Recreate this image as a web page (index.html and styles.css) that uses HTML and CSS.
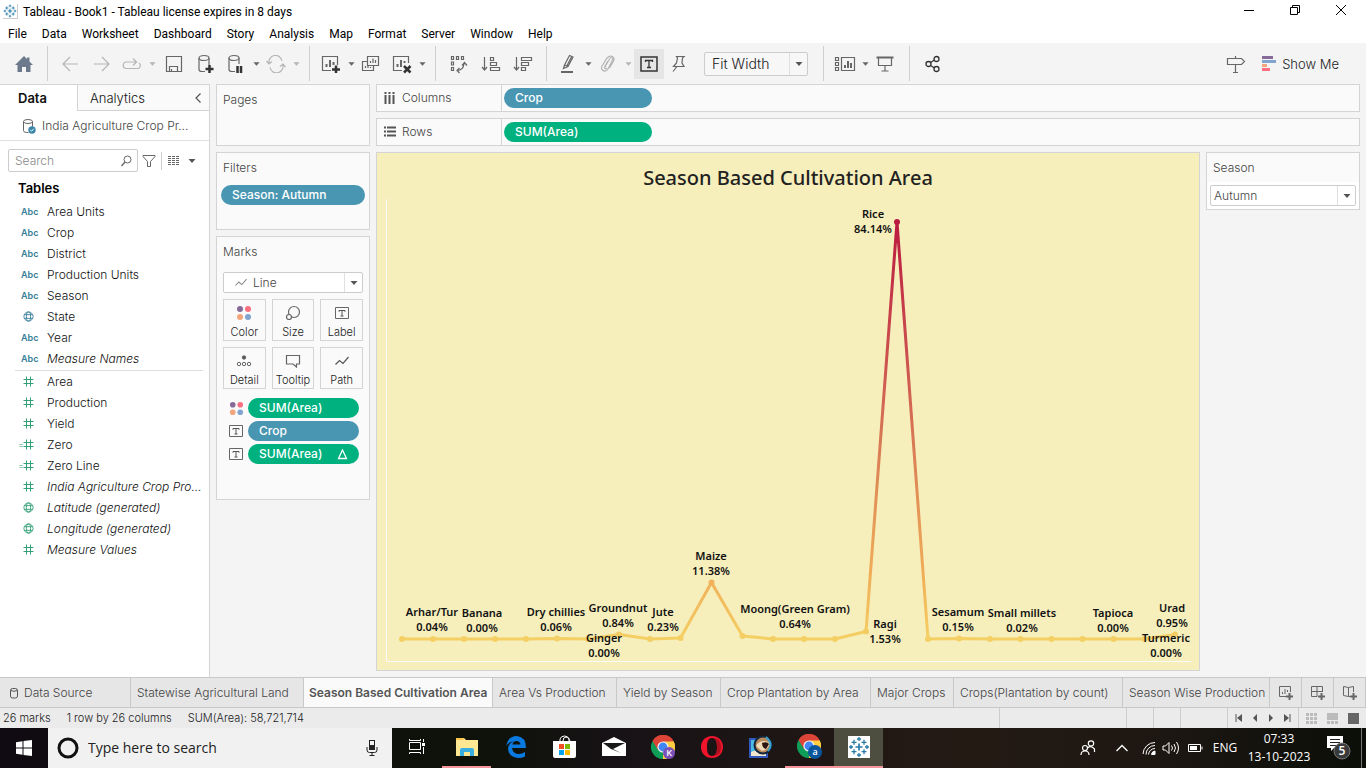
FILE: index.html
```html
<!DOCTYPE html>
<html lang="en">
<head>
<meta charset="utf-8">
<title>Tableau - Book1</title>
<link rel="stylesheet" href="styles.css">
</head>
<body>
<svg class="sprite" aria-hidden="true">
  <symbol id="caret" viewBox="0 0 8 8"><path d="M.5 2h7L4 6z" fill="currentColor"/></symbol>
  <symbol id="logo" viewBox="0 0 22 22"><g fill="none" stroke="currentColor" stroke-width="1.3"><path d="M11 7.5v7M7.5 11h7" stroke-width="1.7"/><path d="M11 1v4M9 3h4M11 17v4M9 19h4M3 9v4M1 11h4M19 9v4M17 11h4M6 3.8v5M3.5 6.3h5M16 3.8v5M13.5 6.3h5M6 13.2v5M3.5 15.7h5M16 13.2v5M13.5 15.7h5"/></g></symbol>
  <symbol id="hash" viewBox="0 0 11 11"><path d="M3.5.5v10M7.5.5v10M.5 3.5h10M.5 7.5h10" stroke="currentColor" fill="none"/></symbol>
  <symbol id="globe" viewBox="0 0 12 12"><g fill="none" stroke="currentColor"><circle cx="6" cy="6" r="5"/><ellipse cx="6" cy="6" rx="2.3" ry="5"/><path d="M1.5 4h9M1.5 8h9"/></g></symbol>
  <symbol id="dots" viewBox="0 0 16 16"><circle cx="4" cy="4" r="3" fill="#866b98"/><circle cx="12" cy="4" r="3" fill="#fb6f80"/><circle cx="4" cy="12" r="3" fill="#f2a57c"/><circle cx="12" cy="12" r="3" fill="#80a4cf"/></symbol>
  <symbol id="tbox" viewBox="0 0 14 12"><path d="M.5.5h13v11H.5z" fill="none" stroke="#666"/><path d="M4 4.8V3.5h6v1.3M7 3.5v5.6M5.5 9h3" fill="none" stroke="#555"/></symbol>
  <symbol id="zig" viewBox="0 0 14 10"><path d="M.5 8.5L4.5 4.500 8 7.500 13.500 1" fill="none" stroke="currentColor" stroke-width="1.2"/></symbol>
  <symbol id="chrome" viewBox="0 0 24 24"><path d="M12 12L1.6 6A12 12 0 0 1 22.4 6z" fill="#db4437"/><path d="M12 12L22.4 6A12 12 0 0 1 12 24z" fill="#ffcd40"/><path d="M12 12L12 24A12 12 0 0 1 1.6 6z" fill="#0f9d58"/><path d="M12 6.5h10.7A12 12 0 0 0 1.6 6L7 15z" fill="#db4437"/><path d="M17 15L12 24A12 12 0 0 0 22.6 6.5H12z" fill="#ffcd40"/><circle cx="12" cy="12" r="5.6" fill="#f1f1f1"/><circle cx="12" cy="12" r="4.4" fill="#4285f4"/></symbol>
</svg>

<header class="titlebar">
  <svg class="app-icon" viewBox="0 0 22 22"><use href="#logo"/></svg>
  <h1 class="window-title">Tableau - Book1 - Tableau license expires in 8 days</h1>
  <div class="window-controls">
    <button aria-label="Minimize"><svg width="12" height="12"><path d="M1 6.5h10" stroke="#000"/></svg></button>
    <button aria-label="Restore"><svg width="12" height="12" fill="none" stroke="#000"><path d="M1.5 3.5h7v7h-7zM3.5 3.5v-2h7v7h-2"/></svg></button>
    <button aria-label="Close"><svg width="12" height="12" fill="none" stroke="#000"><path d="M1 1l10 10M11 1L1 11"/></svg></button>
  </div>
</header>

<nav class="menubar" aria-label="Menu">
  <button>File</button><button>Data</button><button>Worksheet</button><button>Dashboard</button><button>Story</button><button>Analysis</button><button>Map</button><button>Format</button><button>Server</button><button>Window</button><button>Help</button>
</nav>

<div class="toolbar" role="toolbar" aria-label="Toolbar">
  <button class="tool home" aria-label="Start page"><svg width="18" height="18"><path d="M9 1L0 10h2.5v7h4.500v-5h4v5h4.500v-7H18L14.500 6.500V2.500h-2.500v1.500z" fill="#6d7a8b"/></svg></button>
  <span class="sep"></span>
  <button class="tool wide off" aria-label="Undo"><svg width="18" height="16"><path d="M17 8H2M9 1L2 8l7 7"/></svg></button>
  <button class="tool wide off" aria-label="Redo"><svg width="18" height="16"><path d="M1 8h15M9 1l7 7-7 7"/></svg></button>
  <button class="tool off" aria-label="Replay"><svg width="20" height="14"><path d="M14 5H4.500a3 3 0 0 0 0 6.500h11a3 3 0 0 0 1.500-5.500M11 1.500L14.500 5 11 8.500"/></svg></button>
  <button class="drop off" aria-label="Replay options"><svg><use href="#caret"/></svg></button>
  <button class="tool wide" aria-label="Save"><svg width="18" height="18"><path d="M1.500 1.500h15v15h-15zM4.500 16.500v-5h8v5M6.500 16.500v-2.500"/></svg></button>
  <button class="tool wide" aria-label="New data source"><svg width="18" height="20"><path d="M8 17.500H5q-3 0-3-2V4M12 4v7"/><ellipse cx="7" cy="4" rx="5" ry="2.500"/><path class="bold" d="M12.500 11v8M8.500 15h8"/></svg></button>
  <button class="tool" aria-label="Pause updates"><svg width="18" height="20"><path d="M8 17.500H5q-3 0-3-2V4M12 4v6"/><ellipse cx="7" cy="4" rx="5" ry="2.500"/><path class="bold" d="M10.500 12v7M14 12v7"/></svg></button>
  <button class="drop" aria-label="Pause options"><svg><use href="#caret"/></svg></button>
  <button class="tool off" aria-label="Refresh"><svg width="20" height="18"><path d="M3 8A6.500 6.500 0 0 1 16 6M17 10A6.500 6.500 0 0 1 4 12.500M.5 6l2.500 3 3-2.500M14 11.500l3-2.500 2.500 3"/></svg></button>
  <button class="drop off" aria-label="Refresh options"><svg><use href="#caret"/></svg></button>
  <span class="sep"></span>
  <button class="tool" aria-label="New worksheet"><svg width="20" height="20"><path d="M10 16.500H1.500v-14h15V11"/><path class="mid" d="M5.500 13v-3M9 13V6M12.500 11V8"/><path class="bold" d="M15 11.500v7.500M11 15.500h8"/></svg></button>
  <button class="drop" aria-label="New worksheet options"><svg><use href="#caret"/></svg></button>
  <button class="tool" aria-label="Duplicate"><svg width="20" height="20"><path d="M6.500 2.500h11v9h-11zM6 7.500H1.500v9h11V12M9.500 9V7M12 9V4.500M14.500 9V6M4.500 14v-2M7 14v-3M9.500 14v-1"/></svg></button>
  <button class="tool clear" aria-label="Clear sheet"><svg width="20" height="20"><path d="M10 16.500H1.500v-14h15V9"/><path class="mid" d="M5.500 13v-3M9 13V6M12.500 9V7"/><path class="bold" d="M12 12l6.500 6.500M18.500 12L12 18.500"/></svg></button>
  <button class="drop" aria-label="Clear options"><svg><use href="#caret"/></svg></button>
  <span class="sep"></span>
  <button class="tool wide" aria-label="Swap rows and columns"><svg width="20" height="20"><path d="M2.500 2.500h2v3h-2zM7.500 2.500h2v3h-2zM12.500 2.500h2v3h-2zM2.500 8h2v3h-2zM2.500 13.500h2v3h-2zM8 16.500q6.500 0 7-7M10.500 14L8 16.500l2.500 2.500M13 11.500l2.500-3 2.500 3"/></svg></button>
  <button class="tool wide" aria-label="Sort ascending"><svg width="20" height="18"><path d="M3.500 2v13M1 12l2.500 3L6 12M9.500 2.500h3v3h-3zM9.500 7.500h6v3h-6zM9.500 12.500h9v3h-9z"/></svg></button>
  <button class="tool wide" aria-label="Sort descending"><svg width="20" height="18"><path d="M3.500 2v13M1 12l2.500 3L6 12M8.500 2.500h10v3h-10zM8.500 7.500h7v3h-7zM8.500 12.500h4v3h-4z"/></svg></button>
  <span class="sep"></span>
  <button class="tool" aria-label="Highlight"><svg width="18" height="20"><path d="M5.500 11l5-9.500 3.500 1.500-5 9.500-4.500 2zM5.500 11L9 12.500M8 11.500L12.500 3"/><path class="mid" d="M2 18h12"/></svg></button>
  <button class="drop" aria-label="Highlight options"><svg><use href="#caret"/></svg></button>
  <button class="tool off" aria-label="Group members"><svg width="16" height="18"><path d="M5 12l4.500-8q2-2.500 3.500 0L8 14q-3 4-6 .5Q1 13 2 11l5-8q3-3 6-1 2 2 0 5l-3.500 6M8 6l-3.500 6q0 3 2.500 1"/></svg></button>
  <button class="drop off" aria-label="Group options"><svg><use href="#caret"/></svg></button>
  <button class="tool pressed" aria-label="Show mark labels"><svg width="18" height="16"><path d="M1 1h16v14H1z" stroke="#333" stroke-width="1.500"/><path d="M5.500 6V4.500h7V6M9 4.500v7M7 11.500h4" stroke="#333" stroke-width="1.300"/></svg></button>
  <button class="tool" aria-label="Fix axes"><svg width="16" height="18"><path d="M6.500 1.500h7.500l-1.500 1.500-.5 5 2 3.500H3.500L6.500 8l1-5zM7 11.500L3 16.500"/></svg></button>
  <div class="select-box fit">
    <select aria-label="Fit"><option>Fit Width</option></select>
    <svg class="caret"><use href="#caret"/></svg>
  </div>
  <span class="sep"></span>
  <button class="tool" aria-label="Show or hide cards"><svg width="22" height="18"><path d="M1.500 2.500h3v3h-3zM1.500 7.500h3v3h-3zM1.500 12.500h3v3h-3zM7.500 2.500h13v13h-13z"/><path class="mid" d="M11 13v-3M14 13V6M17 13V8"/></svg></button>
  <button class="drop" aria-label="Card options"><svg><use href="#caret"/></svg></button>
  <button class="tool present" aria-label="Presentation mode"><svg width="18" height="18"><path d="M2.500 2v8.500h13V2M9 10.500v5M5.500 16h7"/><path class="mid" d="M.5 2.500h17"/></svg></button>
  <span class="sep"></span>
  <button class="tool wide" aria-label="Share"><svg width="18" height="18"><g stroke="#333" stroke-width="1.300"><circle cx="4.500" cy="9" r="2.500"/><circle cx="12.500" cy="4" r="2.500"/><circle cx="12.500" cy="14" r="2.500"/><path d="M6.500 7.500l4-2.500M6.500 10.500l4 2.500"/></g></svg></button>
  <button class="tool guide" aria-label="Guide"><svg width="20" height="20"><path d="M1.500 4.500h14l3 3-3 3h-14zM9.500 2v2.500M9.500 10.500v8M7 18.500h5"/></svg></button>
  <button class="show-me"><svg width="15" height="16"><path fill="#866b98" d="M0 0h11v3H0z"/><path fill="#80a4cf" d="M0 4h14v3H0z"/><path fill="#f2a57c" d="M0 8h5v3H0z"/><path fill="#fb6f80" d="M0 12h8v3H0z"/></svg>Show Me</button>
</div>

<main class="workspace">
  <aside class="data-pane">
    <div class="pane-tabs">
      <button class="pane-tab active">Data</button>
      <button class="pane-tab">Analytics</button>
      <button class="collapse" aria-label="Collapse pane"><svg width="8" height="12"><path d="M6.500 1.500L2 6l4.500 4.500" fill="none" stroke="#555" stroke-width="1.200"/></svg></button>
    </div>
    <div class="source"><svg width="14" height="16"><path d="M1.500 3.500v9q0 2 3 2h2M10.500 3.500v5" fill="none" stroke="#666"/><ellipse cx="6" cy="3.500" rx="4.500" ry="2" fill="none" stroke="#666"/><circle cx="10" cy="12" r="3.700" fill="#3b86a8"/><path d="M8.300 12l1.200 1.200 2.200-2.400" fill="none" stroke="#fff"/></svg><span>India Agriculture Crop Pr...</span></div>
    <div class="search-row">
      <label class="search"><input type="text" placeholder="Search" aria-label="Search fields"><svg width="11" height="12"><circle cx="6.500" cy="4.500" r="3.500" fill="none" stroke="#666"/><path d="M4 7L.5 11" stroke="#666" stroke-width="1.300"/></svg></label>
      <button aria-label="Filter"><svg width="14" height="14"><path d="M1 1.500h12v1L8.500 7.500v5h-3v-5L1 2.500z" fill="none" stroke="#666"/></svg></button>
      <button class="view-as" aria-label="View as"><svg width="12" height="11"><path d="M0 1.500h12M0 3.500h12M0 5.500h12M0 7.500h12M0 9.500h12" stroke="#666" stroke-dasharray="3 1"/></svg><svg class="caret"><use href="#caret"/></svg></button>
    </div>
    <h2 class="tables-title">Tables</h2>
    <ul class="fields">
      <li><b class="abc">Abc</b>Area Units</li>
      <li><b class="abc">Abc</b>Crop</li>
      <li><b class="abc">Abc</b>District</li>
      <li><b class="abc">Abc</b>Production Units</li>
      <li><b class="abc">Abc</b>Season</li>
      <li><svg class="type dim"><use href="#globe"/></svg>State</li>
      <li><b class="abc">Abc</b>Year</li>
      <li class="gen"><b class="abc">Abc</b>Measure Names</li>
    </ul>
    <ul class="fields measures">
      <li><svg class="type"><use href="#hash"/></svg>Area</li>
      <li><svg class="type"><use href="#hash"/></svg>Production</li>
      <li><svg class="type"><use href="#hash"/></svg>Yield</li>
      <li class="calc"><svg class="type"><use href="#hash"/></svg>Zero</li>
      <li class="calc"><svg class="type"><use href="#hash"/></svg>Zero Line</li>
      <li class="gen"><svg class="type"><use href="#hash"/></svg>India Agriculture Crop Pro...</li>
      <li class="gen"><svg class="type"><use href="#globe"/></svg>Latitude (generated)</li>
      <li class="gen"><svg class="type"><use href="#globe"/></svg>Longitude (generated)</li>
      <li class="gen"><svg class="type"><use href="#hash"/></svg>Measure Values</li>
    </ul>
  </aside>

  <div class="cards">
    <section class="card pages"><h2>Pages</h2></section>
    <section class="card filters"><h2>Filters</h2><button class="pill dimension">Season: Autumn</button></section>
    <section class="card marks">
      <h2>Marks</h2>
      <div class="select-box mark-type">
        <svg class="mark-icon"><use href="#zig"/></svg>
        <select aria-label="Mark type"><option>Line</option></select>
        <svg class="caret"><use href="#caret"/></svg>
      </div>
      <div class="mark-buttons">
        <button><svg width="16" height="16"><use href="#dots"/></svg>Color</button>
        <button><svg width="16" height="16" fill="none" stroke="#666" stroke-width="1.200"><circle cx="9" cy="7" r="5.500"/><circle cx="4" cy="12" r="2.500" fill="#fafafa"/></svg>Size</button>
        <button><svg width="14" height="12"><use href="#tbox"/></svg>Label</button>
        <button><svg width="16" height="12" fill="none" stroke="#666"><circle cx="8" cy="2.500" r="1.700" fill="#555"/><circle cx="3" cy="9" r="1.700"/><circle cx="8" cy="9" r="1.700"/><circle cx="13" cy="9" r="1.700"/></svg>Detail</button>
        <button><svg width="16" height="14" fill="none" stroke="#666" stroke-width="1.200"><path d="M1.500 1.500h13v8.500h-3v3L8 10H1.500z"/></svg>Tooltip</button>
        <button><svg width="16" height="10" color="#555"><use href="#zig"/></svg>Path</button>
      </div>
      <ul class="encodings">
        <li><svg width="15" height="15"><use href="#dots"/></svg><button class="pill measure">SUM(Area)</button></li>
        <li><svg width="14" height="12"><use href="#tbox"/></svg><button class="pill dimension">Crop</button></li>
        <li><svg width="14" height="12"><use href="#tbox"/></svg><button class="pill measure">SUM(Area)<svg width="11" height="11"><path d="M5.500 1L1.500 9.500h8z" fill="none" stroke="#fff" stroke-width="1.300"/></svg></button></li>
      </ul>
    </section>
  </div>

  <div class="sheet">
    <section class="shelf"><h2><svg width="12" height="12"><path d="M1.500 0v2M1.500 3v9M5.500 0v2M5.500 3v9M9.500 0v2M9.500 3v9" stroke="#555" stroke-width="2"/></svg>Columns</h2><button class="pill dimension">Crop</button></section>
    <section class="shelf"><h2><svg width="12" height="12"><path d="M0 1.500h2M3 1.500h9M0 5.500h2M3 5.500h9M0 9.500h2M3 9.500h9" stroke="#555" stroke-width="2"/></svg>Rows</h2><button class="pill measure">SUM(Area)</button></section>
    <div class="view-row">
      <section class="view">
        <h2>Season Based Cultivation Area</h2>
        <svg class="chart" viewBox="377 199 822 471" role="img" aria-label="Cultivation area by crop">
          <defs><linearGradient id="heat" gradientUnits="userSpaceOnUse" x1="0" y1="222" x2="0" y2="640"><stop offset="0" stop-color="#bb1a40"/><stop offset=".35" stop-color="#cd5550"/><stop offset=".6" stop-color="#dd8856"/><stop offset=".84" stop-color="#f0ad58"/><stop offset="1" stop-color="#f4d064"/></linearGradient></defs>
          <path class="axis" d="M386.500 199v462.500H1191"/>
          <path class="series" d="M402 639L433 639L464 639L495 639L526 639L557 638.500L588 639L619 634.500L650 639L680.500 638L711.500 582.500L742.500 636L773 639L804 639L835 639L866 631.500L897 222L928 639L959 638.500L990 639L1020.500 639L1051.500 639L1082.500 639L1113.500 639L1144.500 639L1175 634.500"/>
          <g class="points">
            <circle cx="402" cy="639" r="3"/><circle cx="433" cy="639" r="3"/><circle cx="464" cy="639" r="3"/><circle cx="495" cy="639" r="3"/><circle cx="526" cy="639" r="3"/><circle cx="557" cy="638.500" r="3"/><circle cx="588" cy="639" r="3"/><circle cx="619" cy="634.500" r="3"/><circle cx="650" cy="639" r="3"/><circle cx="680.500" cy="638" r="3"/><circle cx="711.500" cy="582.500" r="3"/><circle cx="742.500" cy="636" r="3"/><circle cx="773" cy="639" r="3"/><circle cx="804" cy="639" r="3"/><circle cx="835" cy="639" r="3"/><circle cx="866" cy="631.500" r="3"/><circle cx="897" cy="222" r="3"/><circle cx="928" cy="639" r="3"/><circle cx="959" cy="638.500" r="3"/><circle cx="990" cy="639" r="3"/><circle cx="1020.500" cy="639" r="3"/><circle cx="1051.500" cy="639" r="3"/><circle cx="1082.500" cy="639" r="3"/><circle cx="1113.500" cy="639" r="3"/><circle cx="1144.500" cy="639" r="3"/><circle cx="1175" cy="634.500" r="3"/>
          </g>
          <g class="labels">
            <text x="432" y="616">Arhar/Tur</text><text x="432" y="631">0.04%</text>
            <text x="482" y="617">Banana</text><text x="482" y="632">0.00%</text>
            <text x="556" y="616">Dry chillies</text><text x="556" y="631">0.06%</text>
            <text x="618" y="612">Groundnut</text><text x="618" y="627">0.84%</text>
            <text x="604" y="642">Ginger</text><text x="604" y="657">0.00%</text>
            <text x="663" y="616">Jute</text><text x="663" y="631">0.23%</text>
            <text x="711" y="560">Maize</text><text x="711" y="575">11.38%</text>
            <text x="795" y="613">Moong(Green Gram)</text><text x="795" y="628">0.64%</text>
            <text x="873" y="218">Rice</text><text x="873" y="233">84.14%</text>
            <text x="885" y="628">Ragi</text><text x="885" y="643">1.53%</text>
            <text x="958" y="616">Sesamum</text><text x="958" y="631">0.15%</text>
            <text x="1022" y="617">Small millets</text><text x="1022" y="632">0.02%</text>
            <text x="1113" y="617">Tapioca</text><text x="1113" y="632">0.00%</text>
            <text x="1172" y="612">Urad</text><text x="1172" y="627">0.95%</text>
            <text x="1166" y="642">Turmeric</text><text x="1166" y="657">0.00%</text>
          </g>
        </svg>
      </section>
      <section class="card season">
        <h2><label for="season">Season</label></h2>
        <div class="select-box"><select id="season"><option>Autumn</option></select><svg class="caret"><use href="#caret"/></svg></div>
      </section>
    </div>
  </div>
</main>

<nav class="sheet-tabs" aria-label="Sheets">
  <button><svg width="10" height="12"><rect x="1.500" y="1.500" width="7" height="9.500" rx="2" fill="none" stroke="#555"/><path d="M1.500 3.500q3.500 1.500 7 0" fill="none" stroke="#555"/></svg>Data Source</button>
  <button>Statewise Agricultural Land</button>
  <button class="active">Season Based Cultivation Area</button>
  <button>Area Vs Production</button>
  <button>Yield by Season</button>
  <button>Crop Plantation by Area</button>
  <button>Major Crops</button>
  <button>Crops(Plantation by count)</button>
  <button>Season Wise Production</button>
  <button class="new" aria-label="New worksheet"><svg width="16" height="16"><path d="M8 11.500H1.500v-10h11V7M4.500 9V7M7 9V4M9.500 7V5"/><path class="plus" d="M11.500 8v7M8 11.500h7"/></svg></button>
  <button class="new" aria-label="New dashboard"><svg width="16" height="16"><path d="M7 11.500H1.500v-10h11V7M7 1.500v10M1.500 6.500h11"/><path class="plus" d="M11.500 8v7M8 11.500h7"/></svg></button>
  <button class="new" aria-label="New story"><svg width="16" height="16"><path d="M6.500 11.500l-5-1v-9l5 1 5-1V7M6.500 2.500v9h2"/><path class="plus" d="M11.500 8v7M8 11.500h7"/></svg></button>
</nav>

<footer class="status">
  <div class="summary"><span>26 marks</span><span>1 row by 26 columns</span><span>SUM(Area): 58,721,714</span></div>
  <div></div><div></div><div></div><div></div>
  <div class="pager">
    <button aria-label="First"><svg width="8" height="8"><path d="M1 0v8" stroke="#555"/><path d="M7 0v8L2 4z" fill="#555"/></svg></button>
    <button aria-label="Previous"><svg width="8" height="8"><path d="M6 0v8L2 4z" fill="#555"/></svg></button>
    <button aria-label="Next"><svg width="8" height="8"><path d="M2 0v8l4-4z" fill="#555"/></svg></button>
    <button aria-label="Last"><svg width="8" height="8"><path d="M7 0v8" stroke="#555"/><path d="M1 0v8l5-4z" fill="#555"/></svg></button>
  </div>
  <div class="modes">
    <button aria-label="Sheet sorter"><svg width="11" height="11"><path d="M0 1.500h11M0 5.500h11M0 9.500h11" stroke="#bbb" stroke-width="3" stroke-dasharray="3 1"/></svg></button>
    <button aria-label="Filmstrip"><svg width="11" height="11"><path d="M0 0h11v7H0z" fill="#bbb"/><path d="M0 9.500h11" stroke="#bbb" stroke-width="3" stroke-dasharray="3 1"/></svg></button>
    <button aria-label="Tabs"><svg width="11" height="11"><path d="M0 0h11v11H0z" fill="#666"/></svg></button>
  </div>
</footer>

<div class="taskbar">
  <button class="start" aria-label="Start"><svg width="16" height="16" fill="#fff"><path d="M0 2.200L6.500 1.300v6.200H0zM7.500 1.100L16 0v7.500H7.500zM0 8.500h6.500v6.200L0 13.800zM7.500 8.500H16V16l-8.500-1.100z"/></svg></button>
  <label class="task-search">
    <svg width="22" height="22"><circle cx="11" cy="11" r="9" fill="none" stroke="#111" stroke-width="3"/></svg>
    <input type="text" placeholder="Type here to search" aria-label="Type here to search">
    <svg width="12" height="18"><rect x="3.500" y="1.500" width="5" height="9" fill="none" stroke="#222"/><path d="M4 6h4v5H4z" fill="#222"/><path d="M1 8v3q0 2.500 2.500 2.500h5Q11 13.500 11 11V8M6 13.500V16M3.500 16.500h5" fill="none" stroke="#222"/></svg>
  </label>
  <div class="apps">
    <button class="task-view" aria-label="Task view"><svg width="18" height="18" fill="none" stroke="#fff"><path d="M1.500 4.500h11v7h-11zM1.500 1v1.500h11V1M1.500 16v-1.500h11V16M15.500 1v3M15.500 9v7"/><path d="M14 5h3v3h-3z" fill="#fff" stroke="none"/></svg></button>
    <button class="open" aria-label="File Explorer"><svg width="24" height="20"><path d="M1 1h8l2 2h12v16H1z" fill="#ffe794"/><path d="M1 1h7l1 2H1z" fill="#f7c64a"/><path d="M5 19v-6q0-2 2-2h10q2 0 2 2v6h-4v-4H9v4z" fill="#3aaee0"/></svg></button>
    <button aria-label="Edge"><svg width="22" height="24"><path d="M1 11Q3 1 12 1q9 1 9 12H7q1 6 7 6 3 0 6-2v4.500Q17 23 13 23 3 22 3 13q1-5 6-7-5 1-8 5zM7.500 9.500h8Q15 6 11.500 6 8 6 7.500 9.500z" fill="#0a7ae0" fill-rule="evenodd"/></svg></button>
    <button aria-label="Store"><svg width="24" height="24"><path d="M0 6h23v15q0 2-2 2H2q-2 0-2-2z" fill="#fff"/><path d="M7 6V4q1-3 4.500-3T16 4v2M10 6q0-4 3-4t4 4" fill="none" stroke="#fff"/><path fill="#f05023" d="M6 9h5v5H6z"/><path fill="#7eba00" d="M12 9h5v5h-5z"/><path fill="#00a3ee" d="M6 15h5v5H6z"/><path fill="#ffb800" d="M12 15h5v5h-5z"/></svg></button>
    <button aria-label="Mail"><svg width="24" height="20"><path d="M0 6l12-6 12 6v13H0z" fill="#fff"/><path d="M1 6h22L11 12l8 4-10-4z" fill="#191919"/></svg></button>
    <button aria-label="Chrome"><svg width="24" height="24"><use href="#chrome"/><circle cx="18" cy="18" r="6" fill="#7950b8"/><text x="18" y="21">K</text></svg></button>
    <button aria-label="Opera"><svg width="24" height="24"><path fill-rule="evenodd" d="M12 1C5 1 1 6 1 12s4 11 11 11 11-5 11-11S19 1 12 1zm0 2c4 0 5 4 5 9s-1 9-5 9-5-4-5-9 1-9 5-9z" fill="#f0152d"/><path d="M12 3c7 0 9 4 9 9s-2 9-9 9c4 0 5-4 5-9s-1-9-5-9z" fill="#ae1020"/></svg></button>
    <button aria-label="Photo viewer"><svg width="24" height="24"><path d="M1 4h17v18H1z" fill="#4bbbe4" stroke="#315abf" stroke-width="2"/><path d="M2 17q6-4 15 2v2H2z" fill="#efe7ce"/><circle cx="14" cy="10" r="8.500" fill="#b98a5c" stroke="#13243d" stroke-width="2"/><path d="M7 11q5-8 14-3-2 7-8 8z" fill="#f0dbb9"/><path d="M13 8q5-2 7 1l-3 5q-4-1-4-6z" fill="#2b1510"/><path d="M17 2q8 7 2 14" fill="none" stroke="#3ba2cd" stroke-width="2"/></svg></button>
    <button class="open" aria-label="Chrome profile"><svg width="26" height="26"><use href="#chrome" width="24" height="24"/><circle cx="18" cy="18" r="7" fill="#07569c"/><text x="18" y="21">a</text></svg></button>
    <button class="open current" aria-label="Tableau"><svg width="22" height="22" color="#287ba8"><path d="M0 0h22v22H0z" fill="#fff"/><use href="#logo" width="22" height="22"/></svg></button>
  </div>
  <div class="tray">
    <button class="people" aria-label="People"><svg width="16" height="16" fill="none" stroke="#fff" stroke-width="1.200"><circle cx="5" cy="8" r="2.500"/><path d="M1 15q0-4 4-4t4 4"/><circle cx="11" cy="3.500" r="2.700"/><path d="M7.500 8q3.500-3 7 1v3"/></svg></button>
    <button class="overflow" aria-label="Show hidden icons"><svg width="14" height="8"><path d="M1.500 7L7 1.500 12.500 7" fill="none" stroke="#fff" stroke-width="1.300"/></svg></button>
    <button class="small" aria-label="Network"><svg width="14" height="14" fill="none" stroke="#fff"><path d="M1 13A12 12 0 0 1 13 1.500M4 13.500a9 9 0 0 1 9-9M6.500 13.500a6.500 6.500 0 0 1 6.500-6"/><path d="M9.500 13.500a4 4 0 0 1 3.500-3.500v3.500z" fill="#fff"/></svg></button>
    <button class="small" aria-label="Volume"><svg width="18" height="14" fill="none" stroke="#fff"><path d="M1 5h2.500L7 1.500v11L3.500 9H1zM9.500 4.500q2 2.500 0 5M12 3q3 4 0 8M14.500 1q4 6 0 12"/></svg></button>
    <button class="battery" aria-label="Battery"><svg width="16" height="10"><path d="M.5 1.500h12v7H.5zM14 3.500v3" fill="none" stroke="#fff"/><path d="M2 3h7v4H2z" fill="#fff"/></svg></button>
    <button class="lang">ENG</button>
    <button class="clock"><span>07:33</span><span>13-10-2023</span></button>
    <button class="notify" aria-label="5 notifications"><svg width="24" height="24"><path d="M0 0h16v12H7l-3 3v-3H0z" fill="#fff"/><path d="M3 3.500h10M3 6.500h10M3 9.500h6" stroke="#222"/><circle cx="15" cy="15" r="8" fill="#3a3a3a" stroke="#777"/><text x="15" y="19">5</text></svg></button>
  </div>
</div>
</body>
</html>
```
FILE: styles.css
```css
* { box-sizing: border-box; }
body {
  margin: 0;
  min-height: 100vh;
  display: flex;
  flex-direction: column;
  background: #f4f4f4;
  color: #222;
  font: 300 12px/16px Inter, "Liberation Sans", sans-serif;
}
button { background: none; border: 0; padding: 0; margin: 0; color: inherit; font: inherit; }
input, select { border: 0; margin: 0; padding: 0; background: none; font: inherit; color: inherit; outline: 0; min-width: 0; }
select { appearance: none; }
h1, h2 { margin: 0; font: inherit; }
ul { list-style: none; margin: 0; padding: 0; }
svg { display: block; flex: none; }
.sprite { position: absolute; width: 0; height: 0; }
.caret { width: 8px; height: 8px; color: #555; }

/* window frame */
.titlebar { display: flex; align-items: center; height: 23px; padding-left: 3px; background: #fff; color: #000; font-family: Roboto, sans-serif; font-weight: 400; }
.app-icon { width: 15px; height: 15px; color: #267ba8; margin-right: 5px; border: 1px solid #ccc; border-width: 0 1px 1px 0; }
.window-title { flex: 1; }
.window-controls { display: flex; align-self: flex-start; margin-right: 2px; }
.window-controls button { width: 46px; height: 20px; display: grid; place-items: center; }
.menubar { display: flex; gap: 15px; height: 20px; padding: 2px 0 0 8px; background: #fff; color: #000; font-family: Roboto, sans-serif; font-weight: 400; }

/* toolbar */
.toolbar { display: flex; align-items: center; height: 41px; }
.toolbar button { display: grid; place-items: center; height: 30px; }
.tool { width: 28px; }
.tool.wide { width: 32px; }
.tool.home { width: 47px; }
.tool svg { fill: none; stroke: #666; stroke-width: 1.2; }
.tool.home svg { stroke: none; }
.tool .mid { stroke-width: 2; }
.tool .bold { stroke: #333; stroke-width: 2.5; }
.tool.off svg { stroke: #b5b5b5; }
.tool.pressed { width: 30px; background: #e5e5e5; }
.tool.clear { margin-left: 3px; }
.tool.present { margin-right: 3px; }
.drop { width: 12px; color: #666; }
.drop svg { width: 7px; height: 8px; }
.drop.off { color: #b5b5b5; }
.sep { width: 1px; height: 35px; margin: 0 7px; background: #d0d0d0; }
.home + .sep { margin: 0 6px 0 0; }
.tool.guide { margin-left: auto; margin-right: 12px; }
.toolbar .show-me { display: flex; align-items: center; gap: 5px; margin-right: 27px; font-size: 13px; }

/* drop-down boxes */
.select-box { display: flex; align-items: center; position: relative; height: 21px; border: 1px solid #ccc; border-radius: 2px; background: #fff; }
.select-box select { flex: 1; height: 100%; width: 100%; }
.select-box .caret { position: absolute; right: 4px; pointer-events: none; }
.select-box::after { content: ""; position: absolute; right: 17px; top: 0; bottom: 0; border-left: 1px solid #e0e0e0; }
.select-box.fit { width: 104px; height: 24px; margin: 0 8px 0 12px; font-size: 14px; background: #f7f7f7; }
.fit select { padding-left: 7px; }

/* workspace */
.workspace { flex: 1; display: flex; }
.data-pane { width: 210px; background: #fff; border: 1px solid #d4d4d4; border-width: 1px 1px 0 0; }
.pane-tabs { display: flex; height: 26px; font-size: 13px; color: #111; }
.pane-tab { flex: 1; padding-left: 12px; text-align: left; background: #fafafa; border: 1px solid #d4d4d4; border-width: 0 0 1px 1px; }
.pane-tab.active { flex: 0 0 77px; padding-left: 18px; background: #fff; border: 0; font-weight: 600; }
.collapse { width: 20px; background: #fafafa; border-bottom: 1px solid #d4d4d4; }
.collapse svg { margin-left: 5px; }
.source { display: flex; align-items: center; gap: 6px; height: 30px; padding-left: 22px; border-bottom: 1px solid #e0e0e0; color: #444; }
.search-row { display: flex; align-items: center; padding: 8px 10px 0 8px; }
.search { display: flex; flex: none; align-items: center; width: 130px; height: 23px; padding: 0 5px 0 6px; margin-right: 4px; border: 1px solid #ccc; border-radius: 2px; }
.search input { flex: 1; width: 0; }
.search input::placeholder { color: #888; }
.view-as { display: flex; align-items: center; gap: 8px; height: 18px; margin-left: 5px; padding-left: 6px; border-left: 1px solid #ccc; }
.tables-title { padding: 8px 0 5px 18px; color: #000; font-size: 13px; font-weight: 600; }
.fields li { display: flex; align-items: center; height: 21px; padding-left: 18px; color: #111; white-space: nowrap; }
.fields .abc { width: 29px; padding-left: 3px; color: #3a7f98; font-size: 9px; font-style: normal; font-weight: 600; }
.type { width: 11px; height: 11px; margin: 0 13px 0 5px; color: #35a078; }
.type.dim { color: #3a7f98; }
.calc::before { content: "="; width: 5px; margin-right: -5px; color: #35a078; font-size: 9px; }
.gen { font-style: italic; }
.measures { margin: 1px 6px 0 15px; border-top: 1px solid #ddd; }
.measures li { padding-left: 3px; }

/* cards */
.cards { display: flex; flex-direction: column; gap: 6px; width: 154px; margin: 0 6px; }
.card { background: #fafafa; border: 1px solid #d4d4d4; color: #444; }
.card h2 { padding: 7px 6px; }
.pages { height: 62px; }
.filters { height: 78px; }
.filters .pill { width: 144px; margin: 2px 4px; }
.marks { height: 264px; }
.pill { display: flex; align-items: center; justify-content: space-between; height: 20px; padding: 0 11px; border-radius: 10px; color: #fff; font-weight: 500; }
.pill.dimension { background: #4996b2; }
.pill.measure { background: #00b180; }
.mark-type { margin: 5px 6px 6px; }
.mark-icon { width: 12px; height: 9px; margin: 0 6px 0 11px; color: #888; }
.mark-buttons { display: grid; grid-template-columns: repeat(3, 1fr); gap: 6px; padding: 0 6px; }
.mark-buttons button { display: grid; grid-template-rows: 26px 12px; align-content: start; place-items: center; height: 42px; border: 1px solid #d4d4d4; color: #222; font-size: 11px; line-height: 12px; }
.encodings { display: grid; gap: 3px; padding: 9px 10px 0 12px; }
.encodings li { display: grid; grid-template-columns: 19px 1fr; align-items: center; }

/* sheet */
.sheet { flex: 1; display: flex; flex-direction: column; gap: 6px; margin: 0 6px 6px 0; }
.shelf { display: flex; align-items: center; height: 28px; border: 1px solid #d4d4d4; background: #fafafa; }
.shelf h2 { display: flex; align-items: center; gap: 6px; width: 125px; height: 100%; padding-left: 7px; border-right: 1px solid #d4d4d4; color: #444; }
.shelf .pill { width: 148px; margin-left: 2px; }
.view-row { flex: 1; display: flex; align-items: flex-start; gap: 6px; }
.view { flex: 1; align-self: stretch; display: flex; flex-direction: column; background: #f6eebb; border: 1px solid #d4d4d4; }
.view h2 { padding: 12px 0 8px; text-align: center; font: 500 20px/26px "Noto Sans", sans-serif; color: #222; }
.chart { width: 100%; }
.axis { fill: none; stroke: #fafafa; }
.series { fill: none; stroke: url(#heat); stroke-width: 3; stroke-linejoin: round; }
.points { fill: url(#heat); }
.labels { font: 600 11px "Noto Sans", sans-serif; fill: #111; text-anchor: middle; }
.season { width: 154px; }
.season .select-box { margin: 2px 3px 3px; padding-left: 3px; }
.season { background: linear-gradient(#fafafa 29px, #fff 29px); }

/* sheet tabs */
.sheet-tabs { display: grid; grid-template-columns: 131fr 173fr 189fr 124fr 104fr 150fr 83fr 169fr 147fr 32px 32px 32px; height: 31px; border: 1px solid #c8c8c8; border-width: 1px 0; background: #e6e6e6; color: #444; }
.sheet-tabs button { display: flex; align-items: center; gap: 5px; min-width: 0; padding-left: 6px; border-right: 1px solid #c8c8c8; white-space: nowrap; }
.sheet-tabs button:first-child { padding-left: 9px; }
.sheet-tabs .active { padding-left: 5px; background: #fafafa; color: #555; font-weight: 600; }
.sheet-tabs .new { padding: 0; justify-content: center; }
.new svg { fill: none; stroke: #666; }
.new .plus { stroke-width: 2; }

/* status bar */
.status { display: grid; grid-template-columns: 1fr 127px 27px 27px 47px 71px 68px; height: 20px; background: #ebebeb; font-size: 11px; line-height: 20px; }
.status > div + div { border-left: 1px solid #ccc; }
.summary { display: flex; gap: 16px; padding-left: 3px; }
.pager, .modes { display: flex; align-items: center; justify-content: space-between; padding: 0 7px; }

/* taskbar */
.taskbar { display: flex; height: 40px; background: linear-gradient(90deg, #100b12, #0e1209 36%, #171216 45%, #241a14 70%, #1d1712 85%, #0b0e08); color: #fff; font: 12px/18px "Open Sans", sans-serif; }
.taskbar button { display: grid; place-items: center; }
.taskbar text { fill: #fff; font-size: 9px; font-weight: 600; text-anchor: middle; }
.start { width: 48px; }
.task-search { display: flex; align-items: center; gap: 9px; width: 344px; padding: 0 14px 0 9px; background: #f1f1f1; color: #222; font-size: 14px; }
.task-search input { flex: 1; }
.task-search input::placeholder { color: #222; }
.apps { display: flex; }
.apps button { width: 49px; border-bottom: 2px solid transparent; }
.apps .task-view { width: 50px; }
.apps .open { border-color: #f5969c; }
.apps .current { background: #4d4e40; }
.tray { display: flex; margin-left: auto; margin-right: 4px; border-right: 1px solid #777; }
.tray .people { width: 37px; }
.tray .overflow { width: 32px; }
.tray .small { width: 22px; }
.tray .battery { width: 27px; }
.tray .lang { width: 32px; }
.tray .clock { width: 76px; align-content: center; }
.tray .notify { width: 44px; }
.tray .notify text { font-size: 12px; }
```
